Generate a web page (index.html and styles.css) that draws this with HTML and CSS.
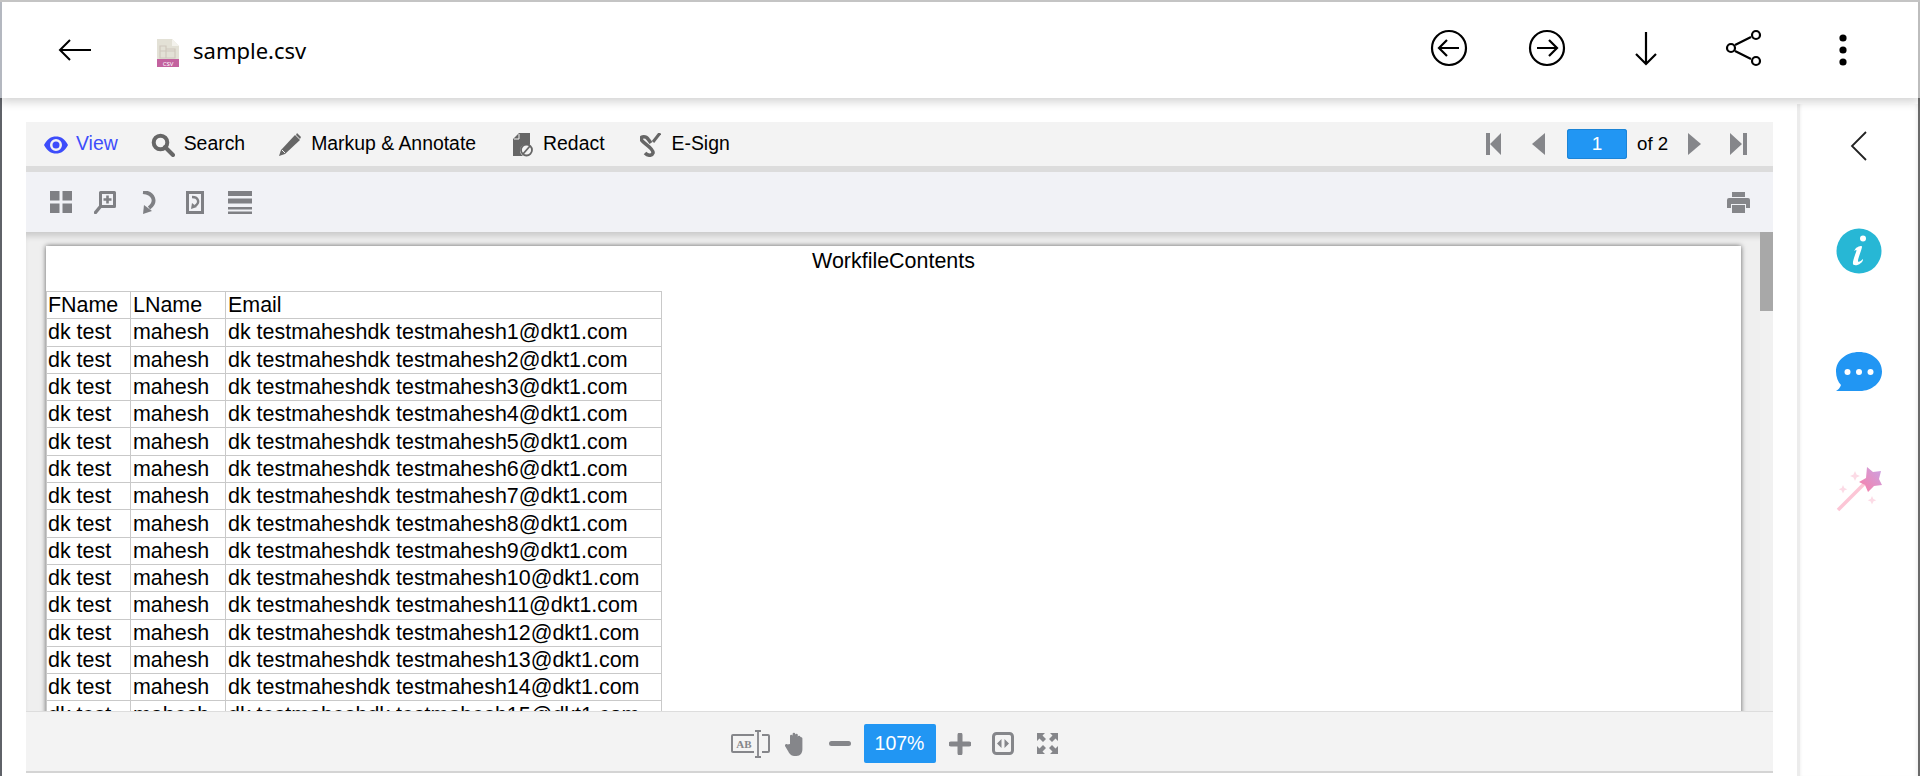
FILE: index.html
```html
<!DOCTYPE html>
<html lang="en">
<head>
    <meta charset="UTF-8">
    <title>sample.csv</title>
    <link rel="stylesheet" href="styles.css">
</head>
<body>
    <header class="topbar">
        <svg class="back" width="34" height="24" viewBox="0 0 34 24"><path d="M33 12H2M12 2 2 12l10 10" fill="none" stroke="#000" stroke-width="2"/></svg>
        <svg class="csv-icon" width="22" height="28" viewBox="0 0 22 28">
            <path d="M0 0h15l7 7v14H0z" fill="#e3e1d6"/><path d="M15 0l7 7h-7z" fill="#f3f2ec"/>
            <path d="M3 7h6v3h9v9H3zM3 12h15M9 10v9" fill="none" stroke="#cfc8bd" stroke-width="1.2"/>
            <rect y="20" width="22" height="8" fill="#c3629f"/>
            <text x="11" y="26.5" class="csv-label" text-anchor="middle">CSV</text>
        </svg>
        <span class="file-name">sample.csv</span>
        <div class="top-actions">
            <svg width="38" height="38" viewBox="0 0 38 38"><g fill="none" stroke="#000" stroke-width="2.200"><circle cx="19" cy="19" r="17"/><path d="M29 19H9M17 11l-8 8 8 8"/></g></svg>
            <svg width="38" height="38" viewBox="0 0 38 38"><g fill="none" stroke="#000" stroke-width="2.200"><circle cx="19" cy="19" r="17"/><path d="M9 19h20M21 11l8 8-8 8"/></g></svg>
            <svg width="38" height="38" viewBox="0 0 38 38"><path d="M19 3v32M9 25l10 10 10-10" fill="none" stroke="#000" stroke-width="2.200"/></svg>
            <svg width="38" height="38" viewBox="0 0 38 38"><g fill="none" stroke="#000" stroke-width="2.200"><path d="M10 16 26 8M10 22l16 8"/><circle cx="6" cy="19" r="4"/><circle cx="31" cy="6" r="4"/><circle cx="31" cy="32" r="4"/></g></svg>
            <svg width="38" height="38" viewBox="0 0 38 38"><g fill="#000"><circle cx="19" cy="9" r="3.600"/><circle cx="19" cy="21" r="3.600"/><circle cx="19" cy="33" r="3.600"/></g></svg>
        </div>
    </header>

    <div class="main">
        <section class="viewer">
            <nav class="menu-bar">
                <a class="menu-item active">
                    <svg width="24" height="20" viewBox="0 0 24 20"><path fill-rule="evenodd" d="M0 10C3 4 7 1.500 12 1.500S21 4 24 10c-3 6-7 8.500-12 8.500S3 16 0 10zm12-6a6 6 0 1 0 0 12 6 6 0 0 0 0-12zm0 2.500a3.500 3.500 0 1 1 0 7 3.500 3.500 0 0 1 0-7z" fill="#3d4dfb"/></svg>
                    View
                </a>
                <a class="menu-item">
                    <svg width="24" height="24" viewBox="0 0 24 24"><circle cx="9.500" cy="9.500" r="6.800" fill="none" stroke="#666" stroke-width="4"/><path d="M14 14l8 8" stroke="#666" stroke-width="4" stroke-linecap="round"/></svg>
                    Search
                </a>
                <a class="menu-item markup">
                    <svg width="24" height="24" viewBox="0 0 24 24"><path d="M17 2l5 5L7 21l-6 2 2-6z" fill="#666"/><path d="M19 0l4 4-1 2-4-4z" fill="#666"/><path d="M4 17l3 3" stroke="#f3f3f3"/></svg>
                    Markup &amp; Annotate
                </a>
                <a class="menu-item redact">
                    <svg width="20" height="24" viewBox="0 0 20 24"><path d="M6 0h11v12a6 6 0 0 0-7 11H0V6z" fill="#666"/><path d="M1 6h5V1" fill="none" stroke="#f3f3f3"/><circle cx="13.500" cy="17" r="5.500" fill="none" stroke="#666" stroke-width="1.800"/><path d="M10 21l7-8" stroke="#666" stroke-width="1.800"/></svg>
                    Redact
                </a>
                <a class="menu-item esign">
                    <svg width="21" height="24" viewBox="0 0 21 24"><path d="M11 10 8 6C6 3 1 3 1 6c0 3 13 9 12 14-1 3-5 3-8 0" fill="none" stroke="#666" stroke-width="3.600"/><path d="M13 9l7-9" stroke="#666" stroke-width="3"/></svg>
                    E-Sign
                </a>
                <div class="pager">
                    <svg class="pg-first" width="15" height="22" viewBox="0 0 15 22"><path d="M0 0h4v22H0zM15 0v22L4 11z" fill="#85868a"/></svg>
                    <svg class="pg-prev" width="13" height="22" viewBox="0 0 13 22"><path d="M13 0v22L0 11z" fill="#85868a"/></svg>
                    <span class="page-input">1</span>
                    <span class="page-of">of 2</span>
                    <svg class="pg-next" width="13" height="22" viewBox="0 0 13 22"><path d="M0 0v22l13-11z" fill="#85868a"/></svg>
                    <svg class="pg-last" width="17" height="22" viewBox="0 0 17 22"><path d="M17 0h-4v22h4zM0 0v22l12-11z" fill="#85868a"/></svg>
                </div>
            </nav>
            <div class="tool-bar">
                <svg width="22" height="22" viewBox="0 0 22 22"><path d="M0 0h9.500v9.500H0zM12.500 0H22v9.500h-9.500zM0 12.500h9.500V22H0zM12.500 12.500H22V22h-9.500z" fill="#7f8084"/></svg>
                <svg class="t-zoom" width="22" height="23" viewBox="0 0 22 23"><path d="M6.500 1.500h14v14h-14z" fill="none" stroke="#7f8084" stroke-width="3" stroke-linejoin="round"/><path d="M13.500 4.500v8M9.500 8.500h8" stroke="#7f8084" stroke-width="2.600"/><path d="M6 16 1.500 21.500" stroke="#7f8084" stroke-width="3.400" stroke-linecap="round"/></svg>
                <svg class="t-rotate" width="14" height="23" viewBox="0 0 14 23"><path d="M1 1c11 1 14 10 6 16" fill="none" stroke="#7f8084" stroke-width="3.800"/><path d="M1 23l1-9 8 6z" fill="#7f8084"/></svg>
                <svg class="t-page" width="18" height="23" viewBox="0 0 18 23"><path d="M1.500 1.500h15v20h-15z" fill="none" stroke="#7f8084" stroke-width="3"/><path d="M6 6c7 0 8 6 3 9" fill="none" stroke="#7f8084" stroke-width="2.400"/><path d="M5 18l1-6 5 4z" fill="#7f8084"/></svg>
                <svg class="t-lines" width="24" height="23" viewBox="0 0 24 23"><path d="M0 0h24v5H0zM0 7.500h24v5H0z" fill="#7f8084"/><path d="M0 16h24v2.500H0zM0 20.500h24V23H0z" fill="#7f8084"/></svg>
                <svg class="t-print" width="23" height="21" viewBox="0 0 23 21"><path d="M5 0h13v5H5zM2 6h19a2 2 0 0 1 2 2v8h-4v-4H4v4H0V8a2 2 0 0 1 2-2zM5 13h13v8H5z" fill="#85868a"/></svg>
            </div>
            <div class="doc-row">
                <div class="doc-area">
                    <div class="doc-page">
                        <div class="doc-title">WorkfileContents</div>
                        <table class="doc-table">
                            <tr><td class="c1">FName</td><td class="c2">LName</td><td>Email</td></tr>
                            <tr><td class="c1">dk test</td><td>mahesh</td><td>dk testmaheshdk testmahesh1@dkt1.com</td></tr>
                            <tr><td class="c1">dk test</td><td>mahesh</td><td>dk testmaheshdk testmahesh2@dkt1.com</td></tr>
                            <tr><td class="c1">dk test</td><td>mahesh</td><td>dk testmaheshdk testmahesh3@dkt1.com</td></tr>
                            <tr><td class="c1">dk test</td><td>mahesh</td><td>dk testmaheshdk testmahesh4@dkt1.com</td></tr>
                            <tr><td class="c1">dk test</td><td>mahesh</td><td>dk testmaheshdk testmahesh5@dkt1.com</td></tr>
                            <tr><td class="c1">dk test</td><td>mahesh</td><td>dk testmaheshdk testmahesh6@dkt1.com</td></tr>
                            <tr><td class="c1">dk test</td><td>mahesh</td><td>dk testmaheshdk testmahesh7@dkt1.com</td></tr>
                            <tr><td class="c1">dk test</td><td>mahesh</td><td>dk testmaheshdk testmahesh8@dkt1.com</td></tr>
                            <tr><td class="c1">dk test</td><td>mahesh</td><td>dk testmaheshdk testmahesh9@dkt1.com</td></tr>
                            <tr><td class="c1">dk test</td><td>mahesh</td><td>dk testmaheshdk testmahesh10@dkt1.com</td></tr>
                            <tr><td class="c1">dk test</td><td>mahesh</td><td>dk testmaheshdk testmahesh11@dkt1.com</td></tr>
                            <tr><td class="c1">dk test</td><td>mahesh</td><td>dk testmaheshdk testmahesh12@dkt1.com</td></tr>
                            <tr><td class="c1">dk test</td><td>mahesh</td><td>dk testmaheshdk testmahesh13@dkt1.com</td></tr>
                            <tr><td class="c1">dk test</td><td>mahesh</td><td>dk testmaheshdk testmahesh14@dkt1.com</td></tr>
                            <tr><td class="c1">dk test</td><td>mahesh</td><td>dk testmaheshdk testmahesh15@dkt1.com</td></tr>
                        </table>
                    </div>
                </div>
                <div class="scroll-track"><div class="scroll-thumb"></div></div>
            </div>
            <div class="zoom-bar">
                <svg class="z-select" width="39" height="28" viewBox="0 0 39 28">
                    <path d="M23 5H2a1 1 0 0 0-1 1v15a1 1 0 0 0 1 1h21M31 5h6a1 1 0 0 1 1 1v15a1 1 0 0 1-1 1h-6" fill="none" stroke="#85868a" stroke-width="2"/>
                    <path d="M24 1h6M27 1v26M24 27h6" fill="none" stroke="#85868a" stroke-width="1.800"/>
                    <text x="13" y="18" class="ab-label" text-anchor="middle">AB</text>
                </svg>
                <svg class="z-hand" width="20" height="24" viewBox="0 0 20 24"><path d="M5 12V4a1.300 1.300 0 0 1 2.600 0V2a1.300 1.300 0 0 1 2.600 0v1a1.300 1.300 0 0 1 2.600 0v2a1.300 1.300 0 0 1 2.600 0c2 0 2 1 2 2v10c0 4-2 7-6 7H9c-3 0-5-3-6-5l-3-5c-.5-1.500 1.500-2.500 2.500-1.500z" fill="#85868a"/></svg>
                <svg class="z-minus" width="22" height="5" viewBox="0 0 22 5"><rect width="22" height="5" rx="2.500" fill="#85868a"/></svg>
                <span class="zoom-value">107%</span>
                <svg class="z-plus" width="22" height="22" viewBox="0 0 22 22"><path d="M11 2v18M2 11h18" stroke="#85868a" stroke-width="5" stroke-linecap="round"/></svg>
                <svg class="z-fit" width="22" height="23" viewBox="0 0 22 23"><rect x="1.500" y="1.500" width="19" height="20" rx="3" fill="none" stroke="#85868a" stroke-width="3"/><path d="M9.500 7v9L5 11.500zM12.500 7v9l4.500-4.500z" fill="#85868a"/></svg>
                <svg class="z-expand" width="21" height="21" viewBox="0 0 21 21"><path d="M0 0h8L5.500 2.500 9 6 6 9 2.500 5.500 0 8zM21 0v8l-2.500-2.500L15 9l-3-3 3.500-3.500L13 0zM0 21v-8l2.500 2.500L6 12l3 3-3.500 3.500L8 21zM21 21h-8l2.500-2.500L12 15l3-3 3.500 3.500L21 13z" fill="#85868a"/></svg>
            </div>
        </section>
        <aside class="side-panel">
            <svg class="s-chevron" width="18" height="30" viewBox="0 0 18 30"><path d="M16 1 2 15l14 14" fill="none" stroke="#222" stroke-width="1.800"/></svg>
            <svg class="s-info" width="46" height="46" viewBox="0 0 46 46"><circle cx="23" cy="23" r="22.500" fill="#27b7d5"/><circle cx="27" cy="10.500" r="3" fill="#fff"/><path d="M20 20c3-2 6-3 6-1-1 5-4 11-4 14 0 2 3 0 5-2 .5 3-5 7-9 6-2-1-1-4 1-10 1-3 2-5 1-5l-2 1z" fill="#fff"/></svg>
            <svg class="s-chat" width="46" height="40" viewBox="0 0 46 40"><path d="M23 0c13 0 23 8.500 23 19.500S36 39 24 39H0c2-1 4-3 5-6-3-3-5-8-5-13.500C0 8.500 10 0 23 0z" fill="#2196f3"/><g fill="#fff"><circle cx="11.500" cy="20" r="3"/><circle cx="23" cy="20" r="3"/><circle cx="34.500" cy="20" r="3"/></g></svg>
            <svg class="s-wand" width="46" height="46" viewBox="0 0 46 46">
                <defs><linearGradient id="star" x1="0" y1="1" x2="1" y2="0"><stop offset="0" stop-color="#fb7fa5"/><stop offset="1" stop-color="#c9a3e6"/></linearGradient></defs>
                <path d="M2 44 28 18" stroke="#fcc6d6" stroke-width="3.500"/>
                <path d="M31 1l6 5 8-1-2 8 3 6-8 1-6 6-3-7-6-3 7-4z" fill="url(#star)"/>
                <path d="M19 5l1.500 3.500L24 10l-3.500 1.500L19 15l-1.500-3.500L14 10l3.500-1.500zM7 19l1.300 3 3 1.300-3 1.300-1.300 3-1.300-3-3-1.300 3-1.300zM36 30l1.300 3 3 1.300-3 1.300-1.300 3-1.300-3-3-1.300 3-1.300z" fill="#fcdbe6"/>
            </svg>
        </aside>
    </div>
</body>
</html>
```

FILE: styles.css
```css
html, body {
    margin: 0;
    padding: 0;
    height: 100%;
}
body {
    display: flex;
    flex-direction: column;
    height: 776px;
    overflow: hidden;
    box-sizing: border-box;
    background: #fff;
    border-top: 2px solid #c4c4c4;
    font-family: "Liberation Sans", Arial, sans-serif;
    color: #000;
}
svg {
    display: block;
    flex-shrink: 0;
}

/* top bar */
.topbar {
    display: flex;
    align-items: center;
    flex-shrink: 0;
    height: 96px;
    padding-left: 56px;
    background: #fff;
    border-left: 2px solid #b4b8c0;
    border-right: 2px solid #bdbdbd;
    box-shadow: 0 3px 10px rgba(0, 0, 0, 0.2);
    position: relative;
    z-index: 2;
}
.csv-icon {
    margin-left: 65px;
    margin-top: 5px;
}
.csv-label {
    font-family: "Noto Sans", sans-serif;
    font-size: 6px;
    fill: #fff;
}
.file-name {
    margin-left: 14px;
    font-family: "Noto Sans", sans-serif;
    font-size: 22px;
}
.top-actions {
    display: flex;
    gap: 60.600px;
    margin-left: auto;
    margin-right: 56px;
    margin-bottom: 4px;
}

/* main area */
.main {
    display: flex;
    flex: 1;
    min-height: 0;
    border-left: 2px solid #5f6268;
    border-right: 2px solid #6a6a6a;
}
.viewer {
    display: flex;
    flex-direction: column;
    width: 1747px;
    margin: 24px 0 3px 24px;
    border-bottom: 2px solid #d4d4d4;
}
.menu-bar {
    display: flex;
    align-items: center;
    flex-shrink: 0;
    height: 44px;
    padding-left: 18px;
    background: #f3f3f3;
    font-size: 19.400px;
}
.menu-item {
    display: flex;
    align-items: center;
    gap: 9px;
    margin-right: 33px;
    padding-bottom: 1px;
    white-space: nowrap;
}
.menu-item svg {
    margin-top: 3px;
}
.menu-item.active {
    color: #3d4dfb;
    gap: 8px;
}
.menu-item.markup {
    margin-right: 37px;
}
.menu-item.redact {
    gap: 10px;
    margin-right: 35px;
}
.menu-item.esign {
    gap: 11px;
}
.pager {
    display: flex;
    align-items: center;
    margin-left: auto;
    margin-right: 26px;
}
.pg-prev {
    margin-left: 31px;
}
.page-input {
    width: 60px;
    height: 30px;
    margin-left: 22px;
    line-height: 30px;
    text-align: center;
    color: #fff;
    background: #2196f3;
    border-radius: 3px;
    box-shadow: inset 0 0 0 1px #1c84d6;
    font-size: 19px;
}
.page-of {
    margin-left: 10px;
    width: 51px;
    font-size: 18.700px;
}
.pg-last {
    margin-left: 29px;
}
.tool-bar {
    display: flex;
    align-items: center;
    flex-shrink: 0;
    height: 60px;
    padding: 0 23px 0 24px;
    border-top: 6px solid #dcdcdc;
    background: #f1f2f6;
}
.t-zoom {
    margin-left: 22px;
}
.t-rotate {
    margin-left: 26px;
}
.t-page {
    margin-left: 30px;
}
.t-lines {
    margin-left: 24px;
}
.t-print {
    margin-left: auto;
}

/* document */
.doc-row {
    display: flex;
    flex: 1;
    min-height: 0;
    background: #efefef;
    box-shadow: inset 0 7px 6px -3px rgba(0, 0, 0, 0.16);
}
.doc-area {
    flex: 1;
    min-width: 0;
    overflow: hidden;
    padding: 14px 19px 0 20px;
}
.doc-page {
    height: 800px;
    background: #fff;
    box-shadow: 0 0 5px rgba(0, 0, 0, 0.6);
}
.doc-title {
    height: 45px;
    line-height: 30px;
    text-align: center;
    font-size: 21.450px;
}
.doc-table {
    border-collapse: collapse;
    table-layout: fixed;
    width: 616px;
    font-size: 21.450px;
}
.doc-table td {
    height: 27.300px;
    box-sizing: border-box;
    padding: 0 0 0 2px;
    border: 1px solid #c9c9c9;
    white-space: nowrap;
    line-height: 26px;
}
.doc-table .c1 {
    width: 84px;
    padding-left: 1px;
}
.doc-table .c2 {
    width: 95px;
}
.scroll-track {
    width: 13px;
    flex-shrink: 0;
    background: #f1f1f1;
}
.scroll-thumb {
    height: 79px;
    background: #a8a8a8;
}

/* bottom zoom bar */
.zoom-bar {
    display: flex;
    align-items: center;
    justify-content: center;
    flex-shrink: 0;
    height: 60px;
    padding: 4px 11px 0 0;
    background: #f3f3f3;
    border-top: 1px solid #ddd;
    box-sizing: border-box;
}
.z-hand {
    margin-left: 15px;
}
.z-minus {
    margin-left: 24px;
}
.zoom-value {
    width: 72px;
    height: 39px;
    margin-left: 13px;
    line-height: 39px;
    text-align: center;
    color: #fff;
    font-size: 19.500px;
    background: #2196f3;
    border-radius: 2px;
}
.z-plus {
    margin-left: 13px;
}
.z-fit {
    margin-left: 21px;
}
.z-expand {
    margin-left: 23px;
}
.ab-label {
    font-family: "Liberation Serif", serif;
    font-weight: bold;
    font-size: 11px;
    fill: #85868a;
}

/* right panel */
.side-panel {
    display: flex;
    flex-direction: column;
    align-items: center;
    flex: 1;
    margin: 6px 0 0 24px;
    border-left: 3px solid #ececec;
    box-shadow: inset 3px 0 3px -2px rgba(0, 0, 0, 0.05), inset -4px 0 4px -3px rgba(0, 0, 0, 0.08);
}
.s-chevron {
    margin-top: 27px;
}
.s-info {
    margin-top: 67px;
}
.s-chat {
    margin-top: 78px;
}
.s-wand {
    margin-top: 74px;
}
```
